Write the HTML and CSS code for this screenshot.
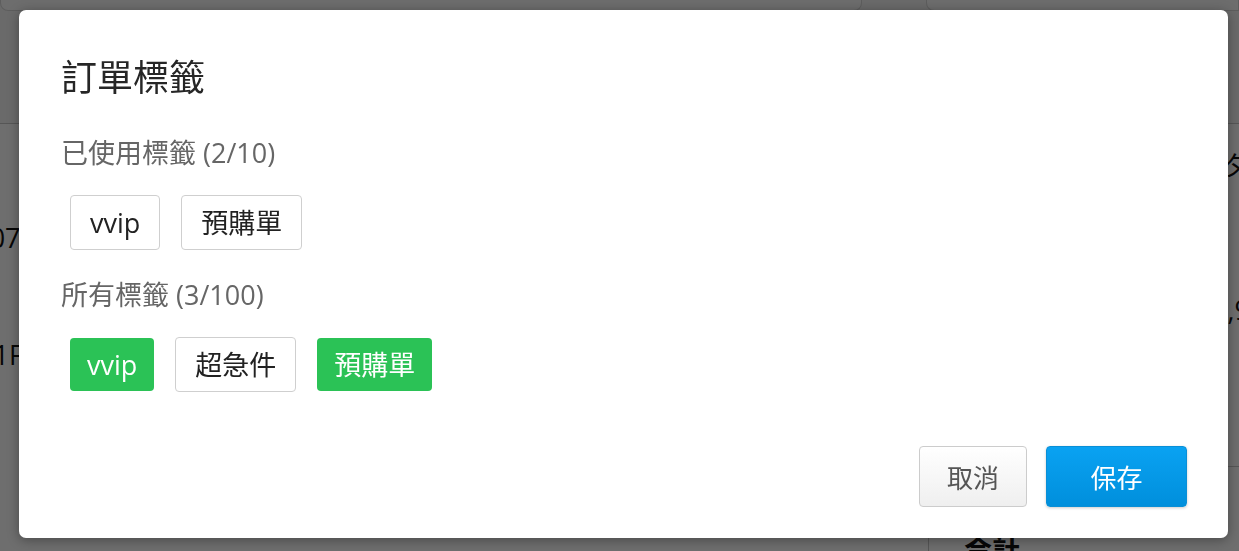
FILE: index.html
```html
<!DOCTYPE html>
<html lang="zh-Hant">
<head>
<meta charset="utf-8">
<title>訂單標籤</title>
<link rel="stylesheet" href="styles.css">
</head>
<body>
<div class="page">
  <div class="page-head">
    <div class="head-card head-card-left"></div>
    <div class="head-card head-card-right"></div>
  </div>
  <div class="page-rows">
    <div class="page-row row-a"><span class="cell-left">2021/07</span><span class="cell-right">タ</span></div>
    <div class="page-row row-b"><span class="cell-left">B1F</span><span class="cell-right">1,9</span></div>
    <div class="page-row row-c"><span class="cell-sum">合計</span></div>
  </div>
</div>
<div class="overlay"></div>
<div class="modal">
  <h1 class="modal-title">訂單標籤</h1>
  <div class="section-label">已使用標籤 (2/10)</div>
  <div class="tag-row">
    <span class="tag">vvip</span>
    <span class="tag">預購單</span>
  </div>
  <div class="section-label">所有標籤 (3/100)</div>
  <div class="tag-row">
    <span class="tag tag-on">vvip</span>
    <span class="tag">超急件</span>
    <span class="tag tag-on">預購單</span>
  </div>
  <div class="modal-footer">
    <button class="btn btn-cancel">取消</button>
    <button class="btn btn-save">保存</button>
  </div>
</div>
</body>
</html>
```
FILE: styles.css
```css
html, body {
  margin: 0;
  padding: 0;
  width: 1239px;
  height: 551px;
  overflow: hidden;
  font-family: "Open Sans", "Noto Sans CJK TC", sans-serif;
}

.page {
  width: 1239px;
  height: 551px;
  overflow: hidden;
  background: #fff;
  display: flex;
  flex-direction: column;
}

.page-head {
  flex-shrink: 0;
  height: 123px;
  border-bottom: 1px solid #c8c8c8;
  background: #f6f6f6;
  display: flex;
  align-items: flex-start;
}

.head-card {
  height: 10px;
  background: #fcfcfc;
  border: 1px solid #d8d8d8;
  border-top: none;
}

.head-card-left {
  width: 860px;
  border-radius: 0 0 8px 8px;
}

.head-card-right {
  margin-left: 64px;
  flex: 1;
  border-radius: 0 0 0 8px;
}

.page-rows {
  flex: 1;
  min-height: 0;
  display: flex;
  flex-direction: column;
}

.page-row {
  flex-shrink: 0;
  display: flex;
  justify-content: space-between;
  align-items: flex-start;
  font-size: 27px;
  color: #111;
}

.row-a {
  margin-top: 25px;
  height: 120px;
}

.row-b {
  height: 198px;
  background: linear-gradient(#c8c8c8, #c8c8c8) right bottom / 311px 1px no-repeat;
}

.row-a .cell-left {
  margin-left: -82px;
  margin-top: 70px;
}

.row-a .cell-right {
  margin-right: -10px;
  margin-top: -4px;
}

.row-b .cell-left {
  margin-left: -24px;
  margin-top: 67px;
}

.row-b .cell-right {
  margin-right: -11px;
  margin-top: 22px;
}

.row-c {
  flex: 1;
  min-height: 0;
  justify-content: flex-start;
  align-items: stretch;
}

.cell-sum {
  margin-left: 928px;
  padding-left: 35px;
  border-left: 1px solid #c8c8c8;
  padding-top: 62px;
  font-size: 28px;
  line-height: 40px;
  font-weight: 700;
}

.overlay {
  position: fixed;
  inset: 0;
  background: rgba(0, 0, 0, 0.57);
}

.modal {
  position: absolute;
  left: 19px;
  top: 10px;
  width: 1209px;
  height: 528px;
  box-sizing: border-box;
  padding: 40px 41px 31px 42px;
  background: #fff;
  border-radius: 7px;
  box-shadow: 0 2px 12px rgba(0, 0, 0, 0.35);
  display: flex;
  flex-direction: column;
}

.modal-title {
  margin: 0 0 29px 0;
  font-size: 36px;
  line-height: 56px;
  font-weight: 400;
  color: #262626;
}

.section-label {
  font-size: 27px;
  line-height: 36px;
  color: #666;
}

.tag-row {
  display: flex;
  align-items: center;
  gap: 21px;
  padding-left: 9px;
  margin: 24px 0 27px 0;
  height: 55px;
}

.tag {
  box-sizing: border-box;
  height: 55px;
  line-height: 53px;
  padding: 0 19px;
  border: 1px solid #cfcfcf;
  border-radius: 4px;
  font-size: 27px;
  color: #222;
  background: #fff;
}

.tag-on {
  height: 53px;
  line-height: 53px;
  padding: 0 17px;
  border: none;
  background: #2bc256;
  color: #fff;
}

.modal-footer {
  margin-top: auto;
  display: flex;
  justify-content: flex-end;
  gap: 19px;
}

.btn {
  box-sizing: border-box;
  height: 61px;
  border-radius: 4px;
  font-family: "Open Sans", "Noto Sans CJK TC", sans-serif;
  font-size: 26px;
  padding: 0;
  cursor: pointer;
}

.btn-cancel {
  width: 108px;
  border: 1px solid #cccccc;
  background: linear-gradient(#ffffff, #efefef);
  color: #555;
}

.btn-save {
  width: 141px;
  border: 1px solid #0a8fd6;
  background: linear-gradient(#0aa2f2, #008fdc);
  color: #fff;
  box-shadow: 0 1px 3px rgba(0, 0, 0, 0.2);
}
```
